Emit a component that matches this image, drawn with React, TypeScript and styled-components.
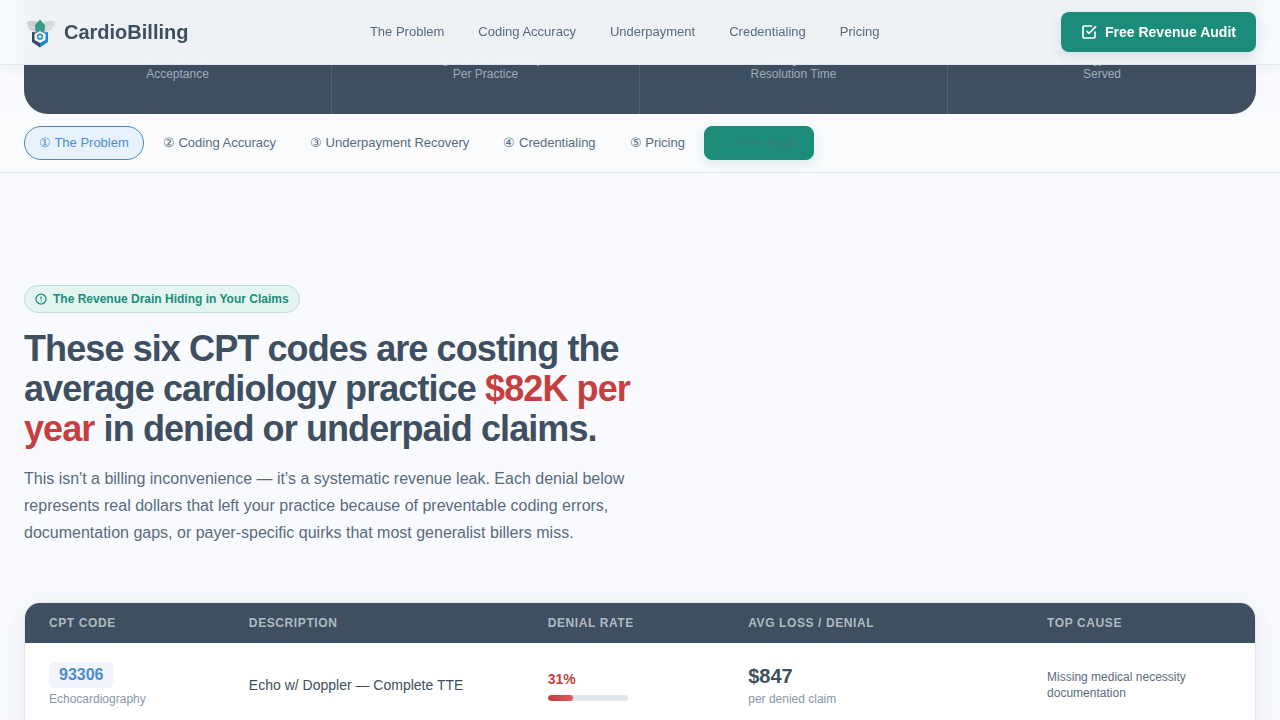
import React from "react";
import styled, { createGlobalStyle } from "styled-components";

const c = {
  page: "#f8fafd",
  navy: "#3d4f60",
  slate: "#5a6b7e",
  muted: "#8a98a8",
  teal: "#1b8c7a",
  blue: "#4a8bd0",
  red: "#c53f3f",
  line: "#e1e7ec",
};

const Global = createGlobalStyle`
  *, *::before, *::after { box-sizing: border-box; }
  html { overflow-x: hidden; }
  body {
    margin: 0;
    background: ${c.page};
    color: ${c.navy};
    font-family: "Liberation Sans", Arial, sans-serif;
  }
  a { text-decoration: none; color: inherit; }
  h2, p { margin: 0; }
`;

const Page = styled.div`
  height: 100vh;
  overflow: hidden;
`;

const Header = styled.header`
  position: sticky;
  top: 0;
  z-index: 10;
  background: rgba(248, 251, 253, 0.95);
  backdrop-filter: blur(16px);
  border-bottom: 1px solid ${c.line};
  box-shadow: 0 2px 12px rgba(61, 79, 97, 0.06);
`;

const HeaderInner = styled.div`
  display: flex;
  align-items: center;
  justify-content: space-between;
  height: 64px;
  padding: 0 24px;
`;

const Brand = styled.a`
  display: flex;
  align-items: center;
  gap: 8px;
  font-size: 20px;
  font-weight: 700;
`;

const MainNav = styled.nav`
  display: flex;
  gap: 34px;
  font-size: 13px;
  line-height: 20px;
  color: ${c.slate};
`;

const AuditButton = styled.button`
  display: flex;
  align-items: center;
  gap: 8px;
  height: 40px;
  padding: 0 20px;
  border: 0;
  border-radius: 8px;
  background: ${c.teal};
  color: #fff;
  font: 700 14px "Liberation Sans", Arial, sans-serif;
  box-shadow: 0 4px 12px rgba(61, 79, 97, 0.12);
`;

const Stats = styled.section`
  display: grid;
  grid-template-columns: repeat(4, 1fr);
  margin: -65px 24px 0;
  border-radius: 0 0 24px 24px;
  background: ${c.navy};
`;

const Stat = styled.div`
  display: flex;
  flex-direction: column;
  align-items: center;
  padding: 52px 24px 32px;
  font-size: 12px;
  line-height: 15px;
  color: #a2adb8;
  border-right: 1px solid #526272;
  &:last-child { border-right: 0; }
`;

const StepNav = styled.nav`
  display: flex;
  align-items: center;
  gap: 4px;
  padding: 12px 24px;
  border-bottom: 1px solid ${c.line};
  background: #f9fbfd;
`;

const Step = styled.a<{ $active?: boolean }>`
  display: flex;
  align-items: center;
  height: 34px;
  padding: 0 14px;
  border: 1px solid ${(p) => (p.$active ? "#4a86bd" : "transparent")};
  border-radius: 17px;
  background: ${(p) => (p.$active ? "#e8f2fd" : "transparent")};
  color: ${(p) => (p.$active ? c.blue : c.slate)};
  font-size: 13px;
  line-height: 18px;
  white-space: pre;
`;

const StepCta = styled(Step)`
  padding: 0 16px;
  border-color: ${c.teal};
  border-radius: 8px;
  background: ${c.teal};
  color: #3a7880;
  box-shadow: 0 4px 12px rgba(26, 140, 123, 0.14);
`;

const Problem = styled.main`
  padding: 112px 24px 0;
`;

const Intro = styled.div`
  display: flex;
  flex-direction: column;
  align-items: flex-start;
  max-width: 640px;
  margin-bottom: 56px;
`;

const Tag = styled.div`
  display: flex;
  align-items: center;
  gap: 6px;
  height: 28px;
  padding: 0 10px;
  border: 1px solid #b8ded8;
  border-radius: 14px;
  background: #e3f4f1;
  color: ${c.teal};
  font-size: 12px;
  font-weight: 700;
`;

const Title = styled.h2`
  margin-top: 16px;
  font-size: 36px;
  line-height: 40px;
  letter-spacing: -0.025em;
`;

const Loss = styled.span`
  color: ${c.red};
`;

const Lead = styled.p`
  margin-top: 16px;
  font-size: 16px;
  line-height: 27px;
  color: ${c.slate};
`;

const TableCard = styled.div`
  overflow: hidden;
  border: 1px solid ${c.line};
  border-bottom: 0;
  border-radius: 16px 16px 0 0;
  background: #fff;
  box-shadow: 0 4px 24px rgba(61, 79, 97, 0.08);
`;

const Table = styled.table`
  width: 100%;
  border-collapse: collapse;
  table-layout: fixed;
`;

const Col = styled.col<{ $w?: number }>`
  width: ${(p) => (p.$w ? `${p.$w}%` : "auto")};
`;

const Th = styled.th`
  height: 40px;
  padding: 0 0 0 16px;
  background: ${c.navy};
  color: #b1b9c0;
  font-size: 12px;
  letter-spacing: 0.05em;
  text-align: left;
  text-transform: uppercase;
  &:first-child { padding-left: 24px; }
`;

const Td = styled.td`
  height: 84px;
  padding: 0 0 0 16px;
  font-size: 14px;
  vertical-align: middle;
  &:first-child { padding-left: 24px; }
`;

const Code = styled.div`
  width: fit-content;
  margin-bottom: 2px;
  padding: 0 10px;
  border-radius: 6px;
  background: #f1f6fc;
  color: ${c.blue};
  font-size: 16px;
  font-weight: 700;
  line-height: 26px;
`;

const Note = styled.div`
  font-size: 12px;
  line-height: 18px;
  color: ${c.muted};
`;

const Rate = styled.div`
  margin-bottom: 6px;
  color: ${c.red};
  font-weight: 700;
  line-height: 20px;
`;

const Track = styled.div`
  width: 80px;
  height: 6px;
  overflow: hidden;
  border-radius: 3px;
  background: #e0e5ed;
`;

const Fill = styled.div`
  height: 100%;
  border-radius: 3px;
  background: linear-gradient(90deg, #c23b40, #de5a62);
`;

const Amount = styled.div`
  font-size: 20px;
  font-weight: 700;
  line-height: 28px;
`;

const Cause = styled.div`
  max-width: 160px;
  font-size: 12px;
  line-height: 16px;
  color: ${c.slate};
`;

const Logo = () => (
  <svg width="32" height="32" viewBox="0 0 32 32" aria-hidden="true">
    <path d="M3 6c3-1.500 6-1.500 8-.5l2-.5v14l-3-3C5 15 4 11 3 6z" fill="#cdd0d2" />
    <path d="M31 6c-3-1.500-6-1.500-8-.5l-3-.5v14l3-3c5-1 7-5 8-10z" fill="#d6d8da" />
    <path d="M5 10l7 2.500M7 14l5 2M29 10l-7 2.500M27 14l-6 2" stroke="#e6e8ea" />
    <path d="M16 3.500l5 5.500v3l-1 5h-8l-1-5V9z" fill="#3d9a88" />
    <path d="M8 16l8 1v14.500L8 26z" fill="#3a4763" />
    <path d="M16 17l8-1v10l-8 5.500z" fill="#1c86cf" />
    <path d="M16 15l5.500 3v6L16 27l-5.500-3v-6z" fill="#edf6fa" />
    <circle cx="16" cy="20.700" r="2.400" fill="#e3f2f8" stroke="#2490b8" strokeWidth="1.500" />
  </svg>
);

const CheckIcon = () => (
  <svg width="16" height="16" viewBox="0 0 24 24" fill="none" stroke="currentColor" strokeWidth="2.5" strokeLinecap="round" strokeLinejoin="round" aria-hidden="true">
    <path d="M9 11l3 3L22 4" />
    <path d="M21 12v7a2 2 0 0 1-2 2H5a2 2 0 0 1-2-2V5a2 2 0 0 1 2-2h11" />
  </svg>
);

const AlertIcon = () => (
  <svg width="12" height="12" viewBox="0 0 24 24" fill="none" stroke="currentColor" strokeWidth="2.5" strokeLinecap="round" aria-hidden="true">
    <circle cx="12" cy="12" r="10" />
    <path d="M12 8v4M12 16h.01" />
  </svg>
);

const navItems = ["The Problem", "Coding Accuracy", "Underpayment", "Credentialing", "Pricing"];
const steps = ["① The Problem", "② Coding Accuracy", "③ Underpayment Recovery", "④ Credentialing", "⑤ Pricing"];
const stats = [
  ["First-Pass Claim", "Acceptance"],
  ["Avg Annual Recovery", "Per Practice"],
  ["Average A/R", "Resolution Time"],
  ["Cardiology Practices", "Served"],
];
const columns = ["CPT Code", "Description", "Denial Rate", "Avg Loss / Denial", "Top Cause"];
const rows = [
  {
    code: "93306",
    group: "Echocardiography",
    description: "Echo w/ Doppler — Complete TTE",
    rate: 31,
    loss: "$847",
    cause: "Missing medical necessity documentation",
  },
];

export default function App() {
  return (
    <Page>
      <Global />
      <Header>
        <HeaderInner>
          <Brand href="#top"><Logo />CardioBilling</Brand>
          <MainNav aria-label="Main">
            {navItems.map((item) => <a key={item} href="#section">{item}</a>)}
          </MainNav>
          <AuditButton type="button"><CheckIcon />Free Revenue Audit</AuditButton>
        </HeaderInner>
      </Header>
      <Stats>
        {stats.map(([top, bottom]) => (
          <Stat key={bottom}><span>{top}</span><span>{bottom}</span></Stat>
        ))}
      </Stats>
      <StepNav aria-label="Sections">
        {steps.map((step, i) => <Step key={step} href="#section" $active={i === 0}>{step}</Step>)}
        <StepCta href="#audit">→ Free Audit</StepCta>
      </StepNav>
      <Problem>
        <Intro>
          <Tag><AlertIcon />The Revenue Drain Hiding in Your Claims</Tag>
          <Title>
            These six CPT codes are costing the average cardiology practice{" "}
            <Loss>$82K per year</Loss> in denied or underpaid claims.
          </Title>
          <Lead>
            This isn't a billing inconvenience — it's a systematic revenue leak. Each denial below
            represents real dollars that left your practice because of preventable coding errors,
            documentation gaps, or payer-specific quirks that most generalist billers miss.
          </Lead>
        </Intro>
        <TableCard>
          <Table>
            <colgroup>
              <Col $w={16.9} /><Col $w={24.3} /><Col $w={16.3} /><Col $w={24.3} /><Col />
            </colgroup>
            <thead>
              <tr>{columns.map((name) => <Th key={name} scope="col">{name}</Th>)}</tr>
            </thead>
            <tbody>
              {rows.map((row) => (
                <tr key={row.code}>
                  <Td><Code>{row.code}</Code><Note>{row.group}</Note></Td>
                  <Td>{row.description}</Td>
                  <Td>
                    <Rate>{row.rate}%</Rate>
                    <Track><Fill style={{ width: `${row.rate}%` }} /></Track>
                  </Td>
                  <Td><Amount>{row.loss}</Amount><Note>per denied claim</Note></Td>
                  <Td><Cause>{row.cause}</Cause></Td>
                </tr>
              ))}
            </tbody>
          </Table>
        </TableCard>
      </Problem>
    </Page>
  );
}
